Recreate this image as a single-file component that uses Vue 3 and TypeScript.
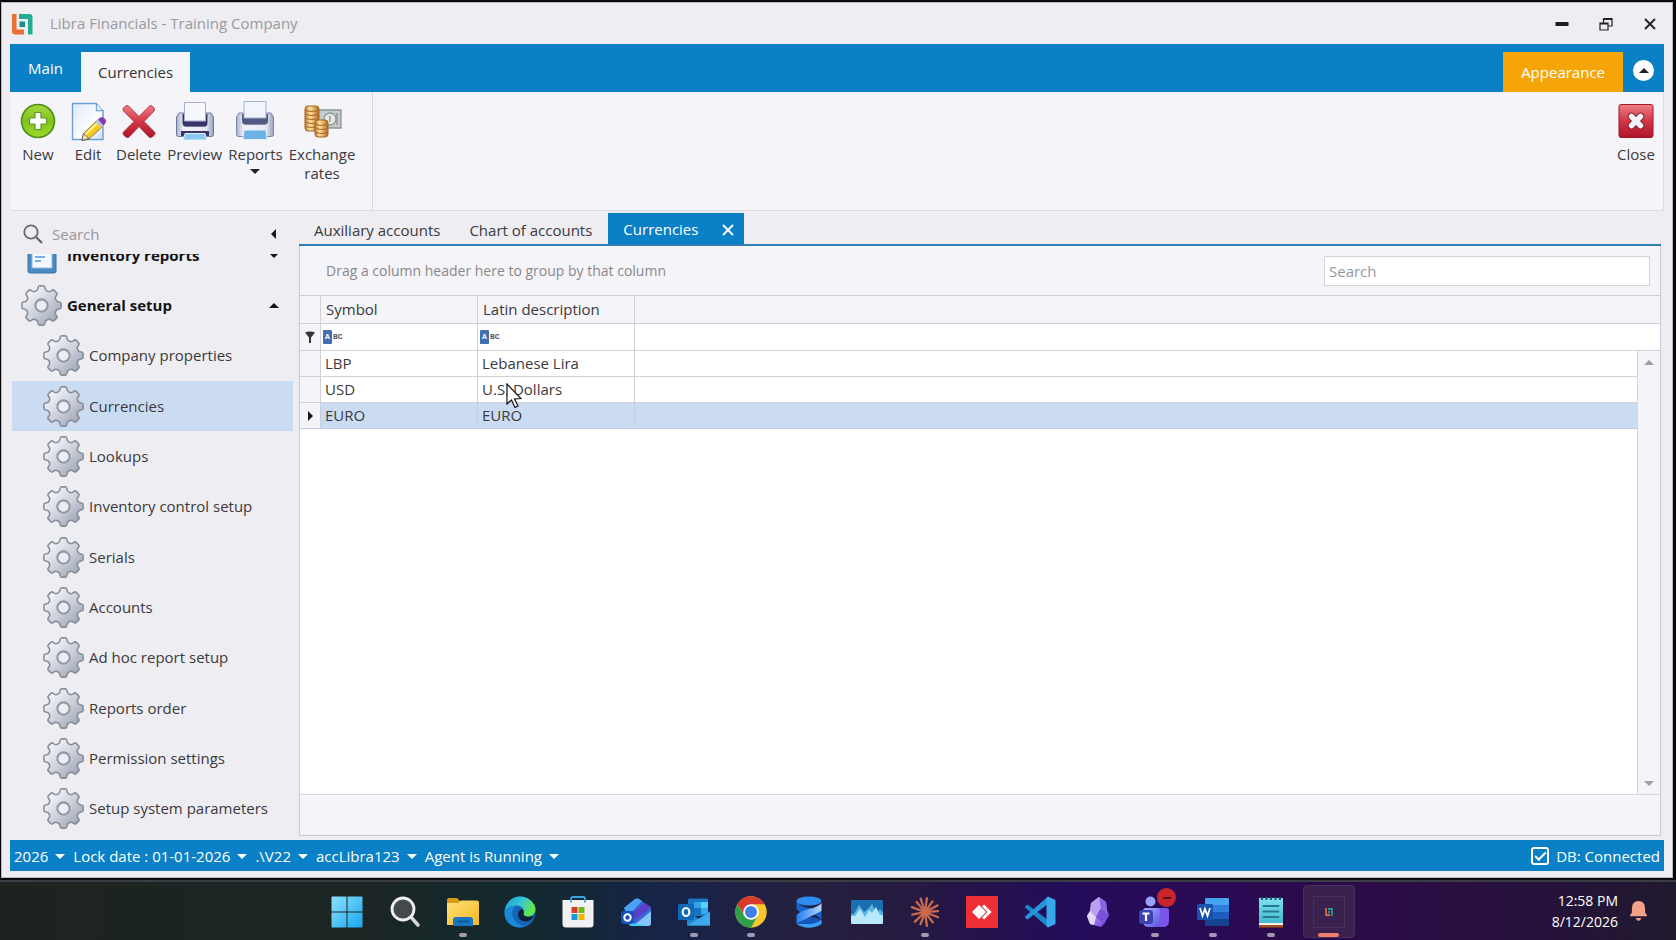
<script setup lang="ts">
import { ref } from 'vue'

interface RibbonItem { label: string; icon: string; menu?: boolean }
interface Currency { symbol: string; description: string }
interface TaskApp { name: string; icon: string; running?: boolean; active?: boolean }

const ribbon: RibbonItem[] = [
  { label: 'New', icon: 'new' },
  { label: 'Edit', icon: 'edit' },
  { label: 'Delete', icon: 'delete' },
  { label: 'Preview', icon: 'preview' },
  { label: 'Reports', icon: 'reports', menu: true },
  { label: 'Exchange rates', icon: 'exchange' },
]

const setupItems: string[] = [
  'Company properties', 'Currencies', 'Lookups', 'Inventory control setup', 'Serials',
  'Accounts', 'Ad hoc report setup', 'Reports order', 'Permission settings', 'Setup system parameters',
]
const activeItem = ref('Currencies')

const currencies: Currency[] = [
  { symbol: 'LBP', description: 'Lebanese Lira' },
  { symbol: 'USD', description: 'U.S. Dollars' },
  { symbol: 'EURO', description: 'EURO' },
]
const selectedRow = ref(2)

const statusItems: string[] = ['2026', 'Lock date : 01-01-2026', '.\\V22', 'accLibra123', 'Agent is Running']
const dbConnected = ref(true)
const navSearch = ref('')
const gridSearch = ref('')

const apps: TaskApp[] = [
  { name: 'Start', icon: 'start' },
  { name: 'Find', icon: 'find' },
  { name: 'File Explorer', icon: 'folder', running: true },
  { name: 'Edge', icon: 'edge' },
  { name: 'Store', icon: 'store' },
  { name: 'Mail', icon: 'mail' },
  { name: 'Outlook', icon: 'outlook', running: true },
  { name: 'Chrome', icon: 'chrome', running: true },
  { name: 'Ribbon tool', icon: 'helix' },
  { name: 'Monitor', icon: 'monitor' },
  { name: 'Claude', icon: 'burst', running: true },
  { name: 'AnyDesk', icon: 'anydesk' },
  { name: 'Code', icon: 'code' },
  { name: 'Obsidian', icon: 'crystal' },
  { name: 'Teams', icon: 'teams', running: true },
  { name: 'Word', icon: 'word', running: true },
  { name: 'Notepad', icon: 'notepad', running: true },
  { name: 'Libra', icon: 'libra', active: true },
]

function polar(r: number, deg: number): string {
  const a = (deg * Math.PI) / 180
  return `${(20 + r * Math.sin(a)).toFixed(2)} ${(20 - r * Math.cos(a)).toFixed(2)}`
}

// Eight-toothed cog on a 40x40 canvas.
const gearPath: string = (() => {
  let d = ''
  for (let i = 0; i < 8; i++) {
    const a = i * 45
    d += `${i === 0 ? 'M' : 'L'}${polar(17.6, a - 11)}Q${polar(19.6, a - 9)} ${polar(19.2, a - 4)}L${polar(19.2, a + 4)}`
    d += `Q${polar(19.6, a + 9)} ${polar(17.6, a + 11)}`
    d += `C${polar(14.4, a + 13)} ${polar(14.4, a + 32)} ${polar(17.6, a + 34)}`
  }
  return d + 'Z'
})()

const rays: { x: number; y: number }[] = [8, 35, 62, 86, 112, 143, 172, 200, 226, 258, 290, 320, 342].map((deg, i) => {
  const r = i % 2 ? 13 : 14
  const a = (deg * Math.PI) / 180
  return { x: 16 + r * Math.sin(a), y: 16 - r * Math.cos(a) }
})
</script>

<template>
  <div class="desktop">
    <svg class="sprite" aria-hidden="true">
      <defs>
        <linearGradient id="gGear" x1="0" y1="0" x2="1" y2="1"><stop offset=".15" stop-color="#f4f6fa" /><stop offset=".55" stop-color="#c9ced8" /><stop offset="1" stop-color="#8f97a6" /></linearGradient>
        <linearGradient id="gGreen" x1="0" y1="0" x2="0" y2="1"><stop offset="0" stop-color="#a5d83f" /><stop offset=".5" stop-color="#7fc21c" /><stop offset="1" stop-color="#9bdc2a" /></linearGradient>
        <linearGradient id="gPage" x1="0" y1="0" x2="1" y2="1"><stop offset="0" stop-color="#ddebfa" /><stop offset=".6" stop-color="#fbfdff" /><stop offset="1" stop-color="#cfe2f5" /></linearGradient>
        <linearGradient id="gRed" x1="0" y1="0" x2="0" y2="1"><stop offset="0" stop-color="#ee7d84" /><stop offset=".5" stop-color="#d23746" /><stop offset="1" stop-color="#b01428" /></linearGradient>
        <linearGradient id="gBody" x1="0" y1="0" x2="1" y2="0"><stop offset="0" stop-color="#a9afc6" /><stop offset=".2" stop-color="#f3f4fa" /><stop offset=".8" stop-color="#e4e7f2" /><stop offset="1" stop-color="#989fba" /></linearGradient>
        <linearGradient id="gCoin" x1="0" y1="0" x2="1" y2="0"><stop offset="0" stop-color="#c07a2a" /><stop offset=".35" stop-color="#fde3a2" /><stop offset="1" stop-color="#b06a20" /></linearGradient>
        <linearGradient id="gWin" x1="0" y1="0" x2="1" y2="1"><stop offset="0" stop-color="#8fe2fd" /><stop offset="1" stop-color="#17a5ee" /></linearGradient>
        <linearGradient id="gFolder" x1="0" y1="0" x2="1" y2="1"><stop offset="0" stop-color="#ffe07a" /><stop offset="1" stop-color="#f2b922" /></linearGradient>
        <linearGradient id="gEdge" x1="0" y1="0" x2="1" y2=".4"><stop offset="0" stop-color="#1f9ae0" /><stop offset=".55" stop-color="#35c5d4" /><stop offset="1" stop-color="#63e64c" /></linearGradient>
        <linearGradient id="gHelix" x1="0" y1="0" x2="1" y2="0"><stop offset="0" stop-color="#1f7ef0" /><stop offset="1" stop-color="#b7d4fb" /></linearGradient>
        <linearGradient id="gCrystal" x1="0" y1="0" x2="1" y2="1"><stop offset="0" stop-color="#d5c4fa" /><stop offset="1" stop-color="#6a3fd6" /></linearGradient>
        <linearGradient id="gTeams" x1="0" y1="0" x2="1" y2="1"><stop offset="0" stop-color="#a7b1ff" /><stop offset="1" stop-color="#5b54e0" /></linearGradient>
        <linearGradient id="gNote" x1="0" y1="0" x2="0" y2="1"><stop offset="0" stop-color="#7fe3ee" /><stop offset="1" stop-color="#3fb6cc" /></linearGradient>
      </defs>

      <symbol id="i-gear" viewBox="0 0 40 40">
        <path :d="gearPath" fill="url(#gGear)" stroke="#868c98" stroke-width="1.5" stroke-linejoin="round" />
        <circle cx="20" cy="20" r="6" fill="#ecedf2" stroke="#9198a4" stroke-width="2" />
      </symbol>
      <symbol id="i-report" viewBox="0 0 30 40">
        <rect x="1" y="2" width="28" height="36" rx="2" fill="#4a8ac4" stroke="#3573ad" />
        <rect x="5" y="6" width="20" height="27" fill="#f4f9ff" stroke="#8fb8dd" />
        <path d="M8 14h13M8 18h13M8 22h10M8 26h6" stroke="#7faee0" stroke-width="2" />
      </symbol>
      <symbol id="i-logo" viewBox="0 0 22 22">
        <path d="M1 1h4.500v15.500H13V21.500H4Q1 21.500 1 18.500Z" fill="#e86f35" />
        <path d="M8 1h10.500Q21.500 1 21.500 4V21.500H17V6H8Z" fill="#24ab94" />
        <rect x="8.500" y="8.500" width="5.500" height="5.500" fill="#178f86" />
      </symbol>

      <symbol id="i-new" viewBox="0 0 38 40">
        <circle cx="19" cy="20" r="16.500" fill="url(#gGreen)" stroke="#4c8f14" stroke-width="1.600" />
        <path d="M16 11.500h6v5.500h5.500v6H22v5.500h-6V23h-5.500v-6H16Z" fill="#fff" stroke="#5d9a26" stroke-width="1.200" stroke-linejoin="round" />
      </symbol>
      <symbol id="i-edit" viewBox="0 0 38 40">
        <path d="M3.500 2.500h24v7h6.500v29H3.500Z" fill="url(#gPage)" stroke="#6c9fd0" stroke-width="1.400" />
        <path d="M27.500 2.500l6.500 7h-6.500Z" fill="#eaf4ff" stroke="#6c9fd0" />
        <path d="M13 39.500l1.500-7 13.500-13 6 5.500-14 13Z" fill="#f7c91f" stroke="#7a6420" stroke-width=".8" />
        <path d="M16 34L29.500 21" stroke="#fff09a" stroke-width="2" />
        <path d="M13 39.500l1.500-7 5.500 5Z" fill="#f3e3c4" stroke="#444" stroke-width=".7" />
        <path d="M26.500 21l3-3 6 5.500-3 3Z" fill="#bcc3d8" />
        <path d="M29 18.500q3-3.500 6-1.500t1.500 5l-2 2.500Z" fill="#8a35b5" />
      </symbol>
      <symbol id="i-delete" viewBox="0 0 38 40">
        <path d="M8.500 5L19 15.500 29.500 5q1.500-1 3 .5l1.500 1.500q1 1.500 0 3L24 20.500 34.500 31q1 1.500 0 3L32 36q-1.500 1-3 0L19 25.500 9 36q-1.500 1-3 0L3.500 34q-1-1.500 0-3L14 20.500 3.500 10q-1-1.500 0-3L5.500 5q1.500-1 3 0Z" fill="url(#gRed)" stroke="#a92c38" stroke-width=".9" />
      </symbol>
      <symbol id="i-preview" viewBox="0 0 40 40">
        <path d="M4 12h5v13h22V12h5l2.500 4v17.500q0 2-2 2h-33q-2 0-2-2V16Z" fill="url(#gBody)" stroke="#7079a0" />
        <path d="M7.500 13h25v9q0 3.500-4 3.500h-17q-4 0-4-3.500Z" fill="#3a3568" />
        <path d="M9.500 1.500h21V20h-21Z" fill="#f6f8fe" stroke="#a7b0cc" />
        <path d="M6 30h28v5H6Z" fill="#3a3568" />
        <path d="M10 32.500h20l2 6.500H8Z" fill="#8cc9f5" stroke="#e7f2fb" />
      </symbol>
      <symbol id="i-reports" viewBox="0 0 40 40">
        <path d="M4 12h5v11h22V12h5l2.500 4v17.500q0 2-2 2h-33q-2 0-2-2V16Z" fill="url(#gBody)" stroke="#7c87a8" />
        <path d="M7 13h26v7q0 3.500-4 3.500H11q-4 0-4-3.500Z" fill="#4f5a80" />
        <path d="M9 .5h22V17H9Z" fill="#eff4fd" stroke="#a7b0cc" />
        <path d="M9 29h22l1 9.500H8Z" fill="#6cb2e6" stroke="#e7f2fb" />
      </symbol>
      <symbol id="i-exchange" viewBox="0 0 40 40">
        <path d="M15 9h24v18H15Z" fill="#c7cccb" stroke="#8f9694" stroke-width="1.400" />
        <ellipse cx="28" cy="18" rx="6" ry="6" fill="#e4e8e6" stroke="#959c9a" stroke-width="1.500" />
        <path d="M28 15v6M35 12v12" stroke="#8f9694" stroke-width="1.500" />
        <rect x="3" y="5" width="14" height="25" rx="3" fill="url(#gCoin)" stroke="#a3641f" />
        <path d="M3 9q7 3 14 0M3 13q7 3 14 0M3 17q7 3 14 0M3 21q7 3 14 0M3 25q7 3 14 0" fill="none" stroke="#b3702a" stroke-width="1.200" />
        <rect x="13" y="19" width="13" height="17" rx="3" fill="url(#gCoin)" stroke="#a3641f" />
        <path d="M13 23q6 3 13 0M13 27q6 3 13 0M13 31q6 3 13 0" fill="none" stroke="#b3702a" stroke-width="1.200" />
      </symbol>
      <symbol id="i-close" viewBox="0 0 38 40">
        <rect x="2" y="3.500" width="34" height="33" rx="2" fill="url(#gRed)" stroke="#a11625" />
        <path d="M14.500 15.500l9 9M23.500 15.500l-9 9" stroke="#83202b" stroke-width="7.500" stroke-linecap="round" />
        <path d="M14.500 15.500l9 9M23.500 15.500l-9 9" stroke="#f3f3f7" stroke-width="5.500" stroke-linecap="round" />
      </symbol>

      <symbol id="i-start" viewBox="0 0 32 32">
        <path d="M1.500 .5H15.500V15.500H.5V1.500Q.5 .5 1.500 .5ZM16.500 .5H30.500q1 0 1 1V15.500H16.500ZM.5 16.500H15.500V31.500H1.500q-1 0-1-1ZM16.500 16.500H31.500V30.500q0 1-1 1H16.500Z" fill="url(#gWin)" />
      </symbol>
      <symbol id="i-find" viewBox="0 0 32 32">
        <path d="M21.500 20.500L29 29" stroke="#d4d6d8" stroke-width="3.500" stroke-linecap="round" />
        <circle cx="14" cy="13" r="11" fill="#424a4c" stroke="#f0f0f1" stroke-width="2.800" />
      </symbol>
      <symbol id="i-folder" viewBox="0 0 32 32">
        <path d="M0 4q0-2 2-2h8l3 3v6H0Z" fill="#d99c1a" />
        <path d="M0 7h11l3-2.500h16q2 0 2 2V29H0Z" fill="url(#gFolder)" />
        <path d="M6 30V24q0-3 3-3h14q3 0 3 3v6Z" fill="#1975bd" />
        <path d="M10 25.500h12" stroke="#0b5390" stroke-width="1.500" />
      </symbol>
      <symbol id="i-edge" viewBox="0 0 32 32">
        <circle cx="16" cy="16" r="15.500" fill="#1466b8" />
        <path d="M.5 17C1 7 8 .5 16 .5S31.500 7 31.500 13c0 5-4 7.500-8 7.500-4 0-5-1.500-4-3C21 14 18.500 9.500 12 9.500 6 9.500 1.500 13 .5 17Z" fill="url(#gEdge)" />
        <path d="M.5 16C2 11.500 7 9.500 12 10c-4 3-5 8-2.500 12.500S17 30 21 30.500C10 34 0 27 .5 16Z" fill="#1c88d8" />
        <path d="M19.500 17.500C19 20.500 25 22 30 19.500 27.500 26 20 27 16 23.500 12.500 20 14 14 18 13Q20.500 15 19.500 17.500Z" fill="#122039" />
      </symbol>
      <symbol id="i-store" viewBox="0 0 32 32">
        <path d="M.5 4h31v24q0 3.500-3.500 3.500H4Q.5 31.500.5 28Z" fill="#f1f1f3" />
        <path d="M9 6.500V3q0-2 2-2h10q2 0 2 2v3.500" fill="none" stroke="#35a7dd" stroke-width="1.800" />
        <path d="M9.500 11H15.500V17H9.500Z" fill="#d93c20" /><path d="M16.500 11H22.500V17H16.500Z" fill="#74b818" />
        <path d="M9.500 18H15.500V24H9.500Z" fill="#149bdc" /><path d="M16.500 18H22.500V24H16.500Z" fill="#f5b400" />
      </symbol>
      <symbol id="i-mail" viewBox="0 0 32 32">
        <path d="M4 12L15 3q2-1.500 4 0l12 9v15q0 3-3 3H9Z" fill="#3b62d8" />
        <path d="M4 12L15 3q2-1 4 0l3 2L9 19Z" fill="#4aa3f2" /><path d="M31 11L13 25l-4-6L25 7Z" fill="#5a3fcb" />
        <path d="M13 30L31 15v12q0 3-3 3Z" fill="#86c4f5" /><path d="M8 26l18 4H11Z" fill="#31d3f5" />
        <rect x="1" y="15" width="13" height="13" rx="3" fill="#1553b8" /><circle cx="7.500" cy="21.500" r="3.200" fill="none" stroke="#fff" stroke-width="2" />
      </symbol>
      <symbol id="i-outlook" viewBox="0 0 32 32">
        <path d="M10 3.500q0-1 1-1h18q1 0 1 1V20H10Z" fill="#1a78c2" /><path d="M16 6h7v6h-7Z" fill="#33a6e8" /><path d="M23 6h7v6h-7Z" fill="#54d2f6" /><path d="M16 12h7v6h-7Z" fill="#1672bd" /><path d="M23 12h7v6h-7Z" fill="#35a9e9" />
        <path d="M9 15l12 8 11-8v14.500H9Z" fill="#1f86d0" /><path d="M9 29.500L32 16v13.500Z" fill="#3da9e8" />
        <rect x="0" y="8" width="16" height="16" rx="1.500" fill="#0f68b8" /><ellipse cx="8" cy="16" rx="3.300" ry="4" fill="none" stroke="#fff" stroke-width="2.200" />
      </symbol>
      <symbol id="i-chrome" viewBox="0 0 32 32">
        <circle cx="16" cy="16" r="15.700" fill="#f9c62c" />
        <path d="M2.400 8.200A15.700 15.700 0 0 1 29.600 8.200H16L9.500 19.500Z" fill="#d93a2f" />
        <path d="M2.400 8.200A15.700 15.700 0 0 0 16 31.700L22.500 20H9.500Z" fill="#2da04b" />
        <circle cx="16" cy="16" r="7.800" fill="#fff" /><circle cx="16" cy="16" r="6" fill="#3f7fe8" />
      </symbol>
      <symbol id="i-helix" viewBox="0 0 32 32">
        <path d="M3.500 5v8q4 5 12.500 5t12.500 6v-8q-4-3-12.500-4T3.500 5Z" fill="#1564cf" />
        <ellipse cx="16" cy="5" rx="12.500" ry="4.500" fill="#2e8bf0" /><path d="M3.500 26q12.500-9 25-2v4q-12 6-25 0Z" fill="#1556bd" />
        <path d="M3.500 19v8.500L28.500 15V7Q25 11 16 13T3.500 19Z" fill="url(#gHelix)" /><path d="M4 28q5 3.800 12 3.800T28.500 28v-4q-6 4-12.500 4T4 28Z" fill="#37a0f7" />
      </symbol>
      <symbol id="i-monitor" viewBox="0 0 32 32">
        <rect x="0" y="4" width="32" height="24" rx="1.500" fill="#1a6fb2" /><path d="M0 18h3l5-9 5 7 4-3 4-5 5 10 3-5 3 4v9.500q0 1.500-1.500 1.500h-29Q0 28 0 26.500Z" fill="#5bb4e4" />
        <path d="M0 20h4l5-7 5 8 4-7 3 3 4-6 4 8h3v7.500q0 1.500-1.500 1.500h-29Q0 28 0 26.500Z" fill="#b7e9fb" />
      </symbol>
      <symbol id="i-burst" viewBox="0 0 32 32">
        <path v-for="(r, i) in rays" :key="i" :d="`M16 16L${r.x.toFixed(1)} ${r.y.toFixed(1)}`" stroke="#c96a4c" stroke-width="2.300" stroke-linecap="round" /><circle cx="16" cy="16" r="4" fill="#c96a4c" />
      </symbol>
      <symbol id="i-anydesk" viewBox="0 0 32 32">
        <path d="M0 0h32v32H0Z" fill="#ef2f36" /><path d="M6 16l7-7 7 7-7 7Z" fill="#fff" /><path d="M17 9.500l6.500 6.500-6.500 6.500" fill="none" stroke="#fff" stroke-width="3" />
      </symbol>
      <symbol id="i-code" viewBox="0 0 32 32">
        <path d="M.5 11l3-2.500L24 24v7.500Z" fill="#1b86c8" /><path d="M.5 21l3 2.500L24 8V.5Z" fill="#2794d8" /><path d="M24 .5L31.500 4v24L24 31.500 22.500 30V2Z" fill="#35a7ea" />
      </symbol>
      <symbol id="i-crystal" viewBox="0 0 32 32">
        <path d="M17 1l7 5 1 8 2 5-5 9-3 3-11-3-3-8 3-5 1-8Z" fill="url(#gCrystal)" /><path d="M17 1l-8 6-1 8 6 6 5-9Z" fill="#b9a0f0" /><path d="M5 20l3-5 6 6-2 8-4-1Z" fill="#e2d8fb" /><path d="M17 1l2 11 6 2-1-8Z" fill="#8b66e4" /><path d="M14 21l5-9 8 7-5 9Z" fill="#7a51dc" />
      </symbol>
      <symbol id="i-teams" viewBox="0 0 32 32">
        <circle cx="11.500" cy="5.500" r="5" fill="#98a0fa" /><path d="M19 12h8q3 0 3 3v10q0 6-6 6h-5Z" fill="#7b55e8" /><path d="M4 15q0-3 3-3h11q3 0 3 3v16H10q-6 0-6-6Z" fill="url(#gTeams)" />
        <rect x="0" y="14" width="14" height="14" rx="3" fill="#3b42b8" /><path d="M3.500 17.500h7M7 17.500V25" stroke="#fff" stroke-width="2.200" />
      </symbol>
      <symbol id="i-word" viewBox="0 0 32 32">
        <path d="M8 3q0-1 1-1h22q1 0 1 1v6H8Z" fill="#46a5ee" /><path d="M8 9h24v7H8Z" fill="#2f7fdc" /><path d="M8 16h24v7H8Z" fill="#1f5cc0" /><path d="M8 23h24v6q0 1-1 1H9q-1 0-1-1Z" fill="#164291" />
        <rect x="0" y="8" width="16" height="16" rx="1.500" fill="#1553ad" /><path d="M3 12l2.500 8L8 13l2.500 7L13 12" fill="none" stroke="#fff" stroke-width="1.800" />
      </symbol>
      <symbol id="i-notepad" viewBox="0 0 32 32">
        <path d="M4 2h24v26H4Z" fill="url(#gNote)" /><path d="M4 27h24v2H4Z" fill="#f5f1ea" /><path d="M4 29h24v2.500H4Z" fill="#a3501f" />
        <path d="M7 1v3M11.500 1v3M16 1v3M20.500 1v3M25 1v3" stroke="#1c5570" stroke-width="2" /><path d="M8.500 10h15M8.500 15.500h15M8.500 21h15" stroke="#247a92" stroke-width="1.800" stroke-linecap="round" />
      </symbol>
      <symbol id="i-libra" viewBox="0 0 32 32">
        <rect x=".5" y=".5" width="31" height="31" fill="none" stroke="#4b2f5f" />
        <path d="M13 12v7h4" fill="none" stroke="#d96a3a" stroke-width="1.800" /><path d="M15 13h4v7" fill="none" stroke="#1f9a8c" stroke-width="1.800" /><path d="M15 15h2v2h-2Z" fill="#1f9a8c" />
      </symbol>
    </svg>

    <div class="window">
      <header class="titlebar">
        <svg class="logo"><use href="#i-logo" /></svg>
        <h1>Libra Financials - Training Company</h1>
        <div class="window-buttons">
          <button type="button" aria-label="Minimize"><svg viewBox="0 0 14 14"><path d="M.5 5h13v4H.5Z" fill="#1c1c1c" /></svg></button>
          <button type="button" aria-label="Restore"><svg viewBox="0 0 14 14" fill="none" stroke="#222" stroke-width="1.200"><path d="M1 6h8v7H1ZM1 7h8M4.500 6V1.500h8.500v7.500H9M4.500 2.500h8.500" /></svg></button>
          <button type="button" aria-label="Close window"><svg viewBox="0 0 14 14"><path d="M2 2l10 10M12 2L2 12" stroke="#222" stroke-width="1.900" /></svg></button>
        </div>
      </header>

      <div class="ribbon-tabs">
        <button type="button" class="ribbon-tab">Main</button>
        <button type="button" class="ribbon-tab active">Currencies</button>
        <button type="button" class="ribbon-tab appearance">Appearance</button>
        <button type="button" class="collapse" aria-label="Collapse ribbon"><svg viewBox="0 0 10 5"><path d="M0 5L5 0l5 5Z" fill="#222" /></svg></button>
      </div>

      <div class="ribbon">
        <div class="ribbon-group">
          <button v-for="item in ribbon" :key="item.label" type="button" class="ribbon-button">
            <svg><use :href="`#i-${item.icon}`" /></svg>
            <span>{{ item.label }}</span>
            <i v-if="item.menu" class="caret"></i>
          </button>
        </div>
        <button type="button" class="ribbon-button close">
          <svg><use href="#i-close" /></svg>
          <span>Close</span>
        </button>
      </div>

      <div class="content">
        <aside class="sidebar">
          <div class="nav-search">
            <svg viewBox="0 0 20 20" fill="none" stroke="#6b6b6f" stroke-width="1.800"><circle cx="8" cy="8" r="6.700" /><path d="M13 13l6 6" stroke-width="2.400" /></svg>
            <input v-model="navSearch" type="search" placeholder="Search" aria-label="Search navigation" />
            <button type="button" aria-label="Collapse navigation"><svg viewBox="0 0 5 10"><path d="M5 0v10L0 5Z" fill="#1a1a1a" /></svg></button>
          </div>
          <nav class="nav-view">
            <div class="nav-list">
              <button type="button" class="nav-group">
                <svg class="book"><use href="#i-report" /></svg>Inventory reports<i class="caret"></i>
              </button>
              <button type="button" class="nav-group">
                <svg><use href="#i-gear" /></svg>General setup<i class="caret up"></i>
              </button>
              <a v-for="item in setupItems" :key="item" href="#" class="nav-item" :class="{ active: item === activeItem }" @click.prevent="activeItem = item">
                <svg><use href="#i-gear" /></svg>{{ item }}
              </a>
            </div>
          </nav>
        </aside>

        <main class="document">
          <div class="doc-tabs">
            <button type="button">Auxiliary accounts</button>
            <button type="button">Chart of accounts</button>
            <div class="doc-active">
              <button type="button">Currencies</button>
              <button type="button" aria-label="Close tab"><svg viewBox="0 0 12 12"><path d="M1 1l10 10M11 1L1 11" stroke="#fff" stroke-width="1.800" /></svg></button>
            </div>
          </div>
          <div class="grid-panel">
            <div class="group-panel">
              <span>Drag a column header here to group by that column</span>
              <input v-model="gridSearch" type="text" placeholder="Search" aria-label="Search currencies" />
            </div>
            <div class="grid-view">
              <table>
                <colgroup><col class="c-mark" /><col class="c-data" /><col class="c-data" /><col /></colgroup>
                <thead>
                  <tr><th></th><th>Symbol</th><th>Latin description</th><th></th></tr>
                  <tr class="filter">
                    <td><svg class="funnel" viewBox="0 0 10 12"><path d="M0 1.500Q5-.5 10 1.500L6 6.500V12H4V6.500Z" fill="#333" /></svg></td>
                    <td><span class="abc"><b>A</b>BC</span></td>
                    <td><span class="abc"><b>A</b>BC</span></td>
                    <td></td>
                  </tr>
                </thead>
                <tbody>
                  <tr v-for="(row, i) in currencies" :key="row.symbol" :class="{ selected: i === selectedRow }" @click="selectedRow = i">
                    <td><svg v-if="i === selectedRow" class="marker" viewBox="0 0 5 10"><path d="M0 0l5 5-5 5Z" fill="#1a1a1a" /></svg></td>
                    <td>{{ row.symbol }}</td>
                    <td>{{ row.description }}</td>
                    <td></td>
                  </tr>
                </tbody>
              </table>
              <div class="scrollbar"><i class="caret up"></i><i class="caret"></i></div>
              <svg class="pointer" viewBox="0 0 16 25"><path d="M1 1v20l4.500-4 3.500 7.500 3-1.500-3.500-7 6.500-.5Z" fill="#fff" stroke="#111" stroke-width="1.200" /></svg>
            </div>
            <div class="grid-footer"></div>
          </div>
        </main>
      </div>

      <footer class="statusbar">
        <button v-for="item in statusItems" :key="item" type="button">{{ item }}<i class="caret"></i></button>
        <label><input v-model="dbConnected" type="checkbox" />DB: Connected</label>
      </footer>
    </div>

    <div class="taskbar">
      <div class="apps">
        <button v-for="app in apps" :key="app.icon" type="button" :aria-label="app.name" :class="{ running: app.running, active: app.active }">
          <svg><use :href="`#i-${app.icon}`" /></svg>
          <i v-if="app.icon === 'teams'" class="badge"></i>
        </button>
      </div>
      <div class="tray">
        <div class="clock"><time>12:58 PM</time><time>8/12/2026</time></div>
        <button type="button" aria-label="Notifications"><svg viewBox="0 0 18 21"><path d="M9 0q7 0 7 8v4l2 3v1H0v-1l2-3V8Q2 0 9 0ZM6 18h6q-1 3-3 3t-3-3Z" fill="#f2a088" /></svg></button>
      </div>
    </div>
  </div>
</template>

<style>
body { margin: 0; }
</style>

<style scoped>
.desktop {
  min-height: 100vh;
  box-sizing: border-box;
  padding-top: 2px;
  display: flex;
  flex-direction: column;
  background: #08080a;
  font: 15px/19px "Segoe UI", "Open Sans", "Noto Sans", sans-serif;
  color: #3a3a3c;
}
.sprite { position: absolute; width: 0; height: 0; }
button { border: 0; padding: 0; margin: 0; background: none; font: inherit; color: inherit; cursor: default; }
input { font: inherit; color: inherit; }
input::placeholder { color: #98989c; opacity: 1; }
svg { flex: none; display: block; }
.caret {
  width: 0;
  height: 0;
  border: 5px solid transparent;
  border-top-color: currentColor;
  border-bottom: 0;
}
.caret.up { border: 5px solid transparent; border-bottom-color: currentColor; border-top: 0; }

.window {
  flex: 1;
  margin: 0 3px 2px 1px;
  padding: 0 8px 6px;
  box-sizing: border-box;
  display: flex;
  flex-direction: column;
  background: #eeedf2;
  border: 1px solid #b9b9be;
}

.titlebar { height: 41px; display: flex; align-items: center; }
.logo { width: 22px; height: 22px; margin-left: 1px; }
h1 { margin: 0 auto 0 17px; font-size: 15px; font-weight: 400; color: #9a9a9e; }
.window-buttons { display: flex; gap: 30px; margin-right: 7px; }
.window-buttons svg { width: 14px; height: 14px; }

.ribbon-tabs { height: 48px; display: flex; align-items: flex-end; background: #0a80c6; color: #fff; }
.ribbon-tab { height: 40px; padding: 0 18px; }
.ribbon-tab:first-child { height: 48px; width: 71px; }
.ribbon-tab.active { padding: 0 17px; background: #f5f4f8; color: #333; }
.ribbon-tab.appearance { margin-left: auto; background: #f6a509; }
.collapse {
  width: 21px;
  height: 21px;
  margin: 0 10px 11px;
  border-radius: 50%;
  background: #fff;
  display: grid;
  place-items: center;
}
.collapse svg { width: 10px; height: 5px; }

.ribbon {
  height: 119px;
  display: flex;
  justify-content: space-between;
  box-sizing: border-box;
  background: #f5f4f8;
  border: solid #dddce2;
  border-width: 0 1px 1px 0;
}
.ribbon-group { display: flex; padding: 0 14px 0 3px; border-right: 1px solid #dad9df; }
.ribbon-button {
  min-width: 50px;
  padding: 9px 3px 0;
  display: flex;
  flex-direction: column;
  align-items: center;
}
.ribbon-button.close { margin-right: 2px; }
.ribbon-button span { width: min-content; margin-top: 4px; }
.ribbon-button svg { width: 40px; height: 40px; }
.ribbon-button .caret { margin-top: 5px; color: #222; }

.content { flex: 1; display: flex; min-height: 0; }
.sidebar { width: 289px; display: flex; flex-direction: column; }
.nav-search { height: 43px; padding: 3px 0 0 13px; box-sizing: border-box; display: flex; align-items: center; gap: 8px; }
.nav-search > svg { width: 20px; height: 20px; }
.nav-search input { flex: 1; min-width: 0; border: 0; padding: 0 1px; background: none; outline: 0; }
.nav-search button { margin-right: 23px; }
.nav-search button svg { width: 5px; height: 10px; }
.nav-view { flex: 1; overflow: hidden; min-height: 0; display: flex; flex-direction: column; }
.nav-list { flex: 1; display: grid; grid-auto-rows: 1fr; margin: -24px 6px 6px 2px; }
.nav-group, .nav-item { display: flex; align-items: center; gap: 5px; color: inherit; text-decoration: none; }
.nav-group svg, .nav-item svg { width: 41px; height: 41px; }
.nav-group svg.book { width: 30px; height: 40px; margin: 0 5px 0 6px; }
.nav-group { padding: 0 14px 0 9px; font-weight: 700; color: #141414; }
.nav-group .caret { margin-left: auto; }
.nav-item { padding-left: 31px; }
.nav-item.active { background: #cbdcf2; }

.document { flex: 1; min-width: 0; display: flex; flex-direction: column; padding: 2px 3px 4px 0; }
.doc-tabs { height: 31px; display: flex; border-bottom: 2px solid #2f80b8; }
.doc-tabs > button { padding: 4px 14px 0 15px; }
.doc-tabs > button + button { padding-right: 16px; }
.doc-active { width: 136px; box-sizing: border-box; padding: 2px 10px 0 15px; display: flex; justify-content: space-between; align-items: center; background: #0a80c6; color: #fff; }
.doc-active svg { width: 12px; height: 12px; }
.grid-panel { flex: 1; display: flex; flex-direction: column; border: 1px solid #cbcad6; border-top: 0; background: #f5f4f8; }
.group-panel { height: 49px; padding: 0 10px 0 26px; display: flex; align-items: center; justify-content: space-between; border-bottom: 1px solid #cfced6; color: #88888c; font-size: 14px; }
.group-panel input { width: 326px; height: 30px; box-sizing: border-box; padding: 0 4px; border: 1px solid #d4d3db; background: #fff; font-size: 15px; outline: 0; }
.grid-view { flex: 1; position: relative; background: #fff; }
table { width: 100%; table-layout: fixed; border-collapse: separate; border-spacing: 0; }
.c-mark { width: 21px; }
.c-data { width: 157px; }
th, td { height: 26px; box-sizing: border-box; padding: 0 4px; text-align: left; font-weight: 400; border: solid #d2d1da; border-width: 0 1px 1px 0; }
th { height: 28px; padding-left: 5px; background: #f5f4f8; }
.filter td { height: 27px; padding: 0 2px; }
tr > :first-child { background: #f5f4f8; }
tr > :last-child { border-right: 0; }
td:first-child { padding: 0; }
.selected td { background: #cbdcf2; border-color: #c3cedf; }
.selected td:first-child { background: #f5f4f8; }
.funnel { width: 10px; height: 12px; margin: auto; }
.marker { width: 5px; height: 10px; margin: auto; }
.abc { display: flex; align-items: center; font: 700 8px/14px "Liberation Mono", monospace; color: #555; }
.abc b { width: 9px; margin-right: 1px; background: #426fb0; color: #fff; text-align: center; border-radius: 1px; }
.scrollbar {
  position: absolute;
  top: 55px;
  right: 0;
  bottom: 0;
  width: 23px;
  padding: 9px 0 8px;
  box-sizing: border-box;
  border-left: 1px solid #d8d7df;
  display: flex;
  flex-direction: column;
  align-items: center;
  justify-content: space-between;
  background: #f5f4f8;
  color: #a0a0a4;
}
.pointer { position: absolute; left: 206px; top: 87px; width: 16px; height: 25px; }
.grid-footer { height: 40px; border-top: 1px solid #d8d7df; }

.statusbar { height: 31px; padding: 1px 4px 0; box-sizing: border-box; display: flex; align-items: center; gap: 8px; background: #0a80c6; color: #fff; }
.statusbar button { display: flex; align-items: center; gap: 7px; }
.statusbar label { margin-left: auto; display: flex; align-items: center; gap: 7px; }
.statusbar input { appearance: none; width: 18px; height: 18px; margin: 0; box-sizing: border-box; border: 2px solid #fff; border-radius: 3px; display: grid; place-items: center; }
.statusbar input:checked::after { content: ""; width: 9px; height: 4px; margin-bottom: 3px; border: solid #fff; border-width: 0 0 2px 2px; transform: rotate(-45deg); }

.taskbar {
  height: 58px;
  border-top: 2px solid #3a3d43;
  display: grid;
  grid-template-columns: 1fr 62% 1fr;
  background: linear-gradient(90deg, #1d2321 0%, #1b2624 22%, #12292f 32%, #17234a 40%, #25203f 48%, #261a40 54%, #230c5a 64%, #2a0a55 72%, #2c0a48 80%, #26123c 92%, #201a2e 100%);
}
.apps { grid-column: 2; display: grid; grid-auto-flow: column; grid-auto-columns: 1fr; justify-items: center; }
.apps button { position: relative; width: 52px; height: 53px; margin-top: 3px; border-radius: 4px; display: grid; place-items: center; }
.apps svg { width: 32px; height: 32px; }
.apps .running::after, .apps .active::after {
  content: "";
  position: absolute;
  left: 0;
  right: 0;
  bottom: 1px;
  width: 8px;
  height: 4px;
  margin: auto;
  border-radius: 2px;
  background: #a399b0;
}
.apps .active { box-sizing: border-box; background: #3a2150; border: 1px solid #45305a; }
.apps .active::after { width: 21px; background: #ec7f6e; bottom: 0; }
.badge { position: absolute; top: 3px; right: 5px; width: 19px; height: 19px; border-radius: 50%; background: linear-gradient(#5c1020, #5c1020) center / 8px 2px no-repeat #c9252f; }
.tray { grid-column: 3; display: flex; justify-content: flex-end; align-items: center; gap: 12px; padding-right: 29px; color: #fff; font-size: 14px; }
.clock { display: flex; flex-direction: column; text-align: right; line-height: 21px; }
.tray svg { width: 17px; height: 20px; }
</style>
